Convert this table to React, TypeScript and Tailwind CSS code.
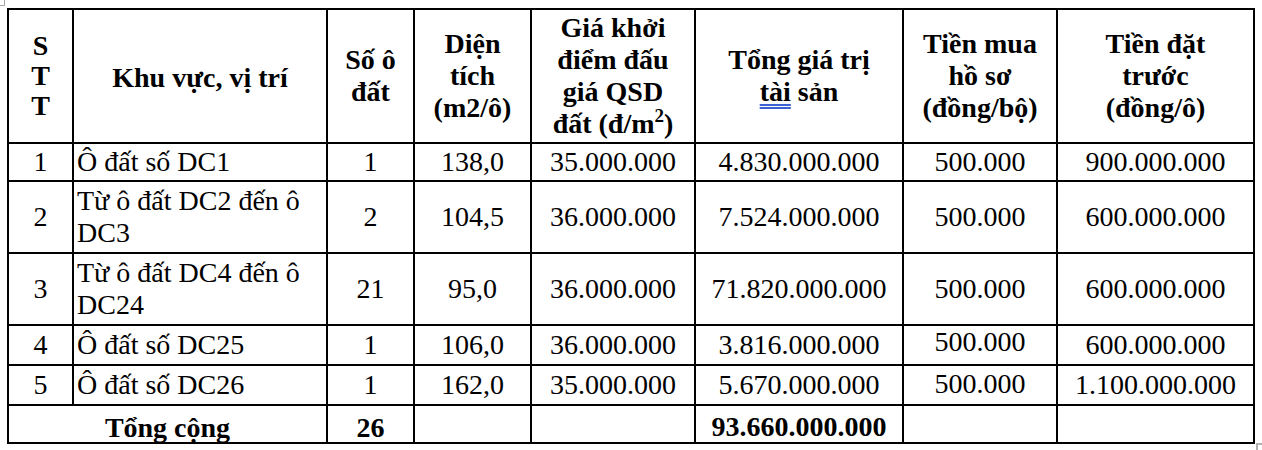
import React from 'react';

type Row = {
  stt: string;
  name: string;
  so: string;
  dienTich: string;
  giaKhoiDiem: string;
  tongGiaTri: string;
  tienHoSo: string;
  tienDatTruoc: string;
  hoSoClass?: string;
};

const rows: Row[] = [
  { stt: '1', name: 'Ô đất số DC1', so: '1', dienTich: '138,0', giaKhoiDiem: '35.000.000', tongGiaTri: '4.830.000.000', tienHoSo: '500.000', tienDatTruoc: '900.000.000' },
  { stt: '2', name: 'Từ ô đất DC2 đến ô DC3', so: '2', dienTich: '104,5', giaKhoiDiem: '36.000.000', tongGiaTri: '7.524.000.000', tienHoSo: '500.000', tienDatTruoc: '600.000.000' },
  { stt: '3', name: 'Từ ô đất DC4 đến ô DC24', so: '21', dienTich: '95,0', giaKhoiDiem: '36.000.000', tongGiaTri: '71.820.000.000', tienHoSo: '500.000', tienDatTruoc: '600.000.000' },
  // hai ô "500.000" cuối bị đẩy lên sát mép trên như trong file Word
  { stt: '4', name: 'Ô đất số DC25', so: '1', dienTich: '106,0', giaKhoiDiem: '36.000.000', tongGiaTri: '3.816.000.000', tienHoSo: '500.000', tienDatTruoc: '600.000.000', hoSoClass: 'items-start pt-0 leading-[20px]' },
  { stt: '5', name: 'Ô đất số DC26', so: '1', dienTich: '162,0', giaKhoiDiem: '35.000.000', tongGiaTri: '5.670.000.000', tienHoSo: '500.000', tienDatTruoc: '1.100.000.000', hoSoClass: 'items-start pt-[2px] leading-[20px]' },
];

const Cell = ({ children, className = '' }: { children?: React.ReactNode; className?: string }) => (
  <div className={`bg-white flex items-center justify-center text-center leading-[32px] ${className}`}>
    {children}
  </div>
);

const App = () => {
  return (
    <div className="relative w-[1262px] h-[450px] bg-white overflow-hidden pl-[7px] pt-[8px] text-black text-[28px] font-['Liberation_Serif','Times_New_Roman',serif]">
      {/* dấu góc lề văn bản của Word */}
      <div className="absolute left-0 top-0 w-[5px] h-[6px] border-r border-b border-[#a8a8a8]" />
      <div className="absolute left-[1256px] top-[443px] w-[6px] h-[7px] border-l-2 border-t-2 border-[#b0b0b0]" />

      <div className="grid w-fit grid-cols-[63px_252px_85px_115px_162px_206px_152px_195px] grid-rows-[132px_36px_70px_70px_38px_38px_36px] gap-[2px] p-[2px] bg-black">
        {/* header */}
        <Cell className="font-bold">
          <div className="leading-[30px]">
            S<br />T<br />T
          </div>
        </Cell>
        <Cell className="font-bold pt-[4px]">Khu vực, vị trí</Cell>
        <Cell className="font-bold">
          <div>
            Số ô<br />đất
          </div>
        </Cell>
        <Cell className="font-bold">
          <div>
            Diện<br />tích<br />(m2/ô)
          </div>
        </Cell>
        <Cell className="font-bold">
          <div>
            Giá khởi<br />điểm đấu<br />giá QSD<br />đất (đ/m<sup className="text-[19px] top-[-0.6em]">2</sup>)
          </div>
        </Cell>
        <Cell className="font-bold">
          <div>
            Tổng giá trị
            <br />
            <span className="underline decoration-double decoration-[#3a62d2] decoration-[2px] underline-offset-[3px]">tài</span> sản
          </div>
        </Cell>
        <Cell className="font-bold">
          <div>
            Tiền mua<br />hồ sơ<br />(đồng/bộ)
          </div>
        </Cell>
        <Cell className="font-bold">
          <div>
            Tiền đặt<br />trước<br />(đồng/ô)
          </div>
        </Cell>

        {/* body */}
        {rows.map((r) => (
          <React.Fragment key={r.stt}>
            <Cell>{r.stt}</Cell>
            <Cell className="justify-start text-left pl-[3px] pr-[3px]">{r.name}</Cell>
            <Cell>{r.so}</Cell>
            <Cell>{r.dienTich}</Cell>
            <Cell>{r.giaKhoiDiem}</Cell>
            <Cell>{r.tongGiaTri}</Cell>
            <Cell className={r.hoSoClass ?? ''}>{r.tienHoSo}</Cell>
            <Cell>{r.tienDatTruoc}</Cell>
          </React.Fragment>
        ))}

        {/* tổng cộng */}
        <Cell className="col-span-2 font-bold items-start pt-[6px] overflow-hidden">Tổng cộng</Cell>
        <Cell className="font-bold items-start pt-[6px] overflow-hidden">26</Cell>
        <Cell />
        <Cell />
        <Cell className="font-bold items-start pt-[5px] overflow-hidden">93.660.000.000</Cell>
        <Cell />
        <Cell />
      </div>
    </div>
  );
};

export default App;
